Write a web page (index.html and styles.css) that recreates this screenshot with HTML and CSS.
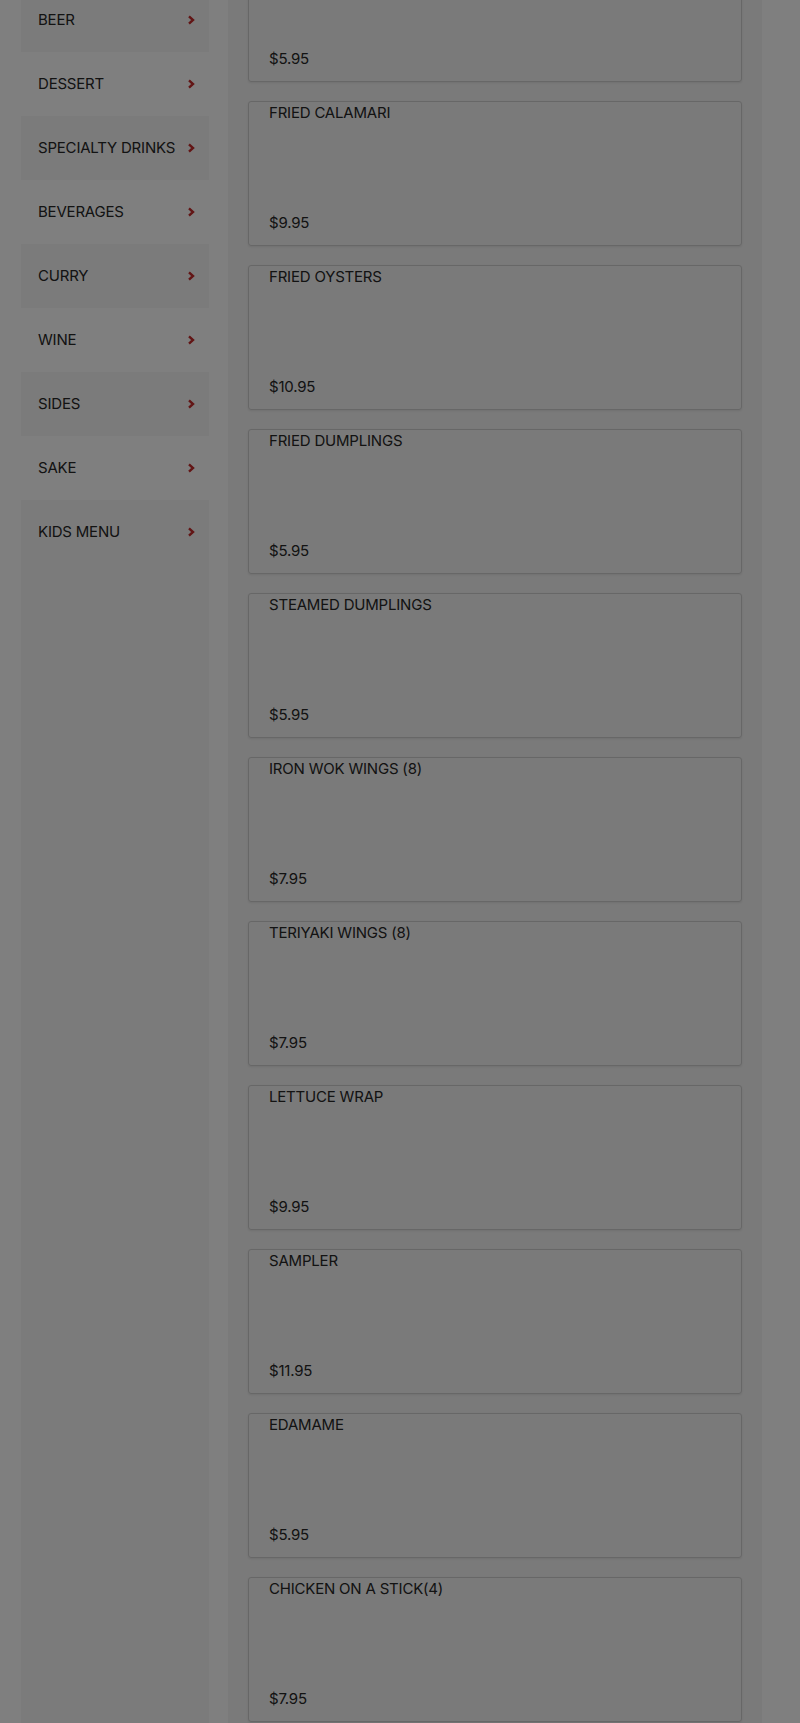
FILE: index.html
```html
<!DOCTYPE html>
<html lang="en">
<head>
    <meta charset="UTF-8">
    <meta name="viewport" content="width=device-width, initial-scale=1.0">
    <title>Menu</title>
    <link rel="stylesheet" href="styles.css">
</head>
<body class="modal-open">

    <div class="menu-page">
        <aside class="menu-nav">
            <a class="menu-nav__item" href="#">BEER <svg class="chev" viewBox="0 0 8 10"><polyline points="2,1.4 6,5 2,8.6"/></svg></a>
            <a class="menu-nav__item" href="#">DESSERT <svg class="chev" viewBox="0 0 8 10"><polyline points="2,1.4 6,5 2,8.6"/></svg></a>
            <a class="menu-nav__item" href="#">SPECIALTY DRINKS <svg class="chev" viewBox="0 0 8 10"><polyline points="2,1.4 6,5 2,8.6"/></svg></a>
            <a class="menu-nav__item" href="#">BEVERAGES <svg class="chev" viewBox="0 0 8 10"><polyline points="2,1.4 6,5 2,8.6"/></svg></a>
            <a class="menu-nav__item" href="#">CURRY <svg class="chev" viewBox="0 0 8 10"><polyline points="2,1.4 6,5 2,8.6"/></svg></a>
            <a class="menu-nav__item" href="#">WINE <svg class="chev" viewBox="0 0 8 10"><polyline points="2,1.4 6,5 2,8.6"/></svg></a>
            <a class="menu-nav__item" href="#">SIDES <svg class="chev" viewBox="0 0 8 10"><polyline points="2,1.4 6,5 2,8.6"/></svg></a>
            <a class="menu-nav__item" href="#">SAKE <svg class="chev" viewBox="0 0 8 10"><polyline points="2,1.4 6,5 2,8.6"/></svg></a>
            <a class="menu-nav__item" href="#">KIDS MENU <svg class="chev" viewBox="0 0 8 10"><polyline points="2,1.4 6,5 2,8.6"/></svg></a>
        </aside>

        <main class="menu-list">
            <div class="menu-card">
                <div class="menu-card__name"></div>
                <div class="menu-card__price">$5.95</div>
            </div>
            <div class="menu-card">
                <div class="menu-card__name">FRIED CALAMARI</div>
                <div class="menu-card__price">$9.95</div>
            </div>
            <div class="menu-card">
                <div class="menu-card__name">FRIED OYSTERS</div>
                <div class="menu-card__price">$10.95</div>
            </div>
            <div class="menu-card">
                <div class="menu-card__name">FRIED DUMPLINGS</div>
                <div class="menu-card__price">$5.95</div>
            </div>
            <div class="menu-card">
                <div class="menu-card__name">STEAMED DUMPLINGS</div>
                <div class="menu-card__price">$5.95</div>
            </div>
            <div class="menu-card">
                <div class="menu-card__name">IRON WOK WINGS (8)</div>
                <div class="menu-card__price">$7.95</div>
            </div>
            <div class="menu-card">
                <div class="menu-card__name">TERIYAKI WINGS (8)</div>
                <div class="menu-card__price">$7.95</div>
            </div>
            <div class="menu-card">
                <div class="menu-card__name">LETTUCE WRAP</div>
                <div class="menu-card__price">$9.95</div>
            </div>
            <div class="menu-card">
                <div class="menu-card__name">SAMPLER</div>
                <div class="menu-card__price">$11.95</div>
            </div>
            <div class="menu-card">
                <div class="menu-card__name">EDAMAME</div>
                <div class="menu-card__price">$5.95</div>
            </div>
            <div class="menu-card">
                <div class="menu-card__name">CHICKEN ON A STICK(4)</div>
                <div class="menu-card__price">$7.95</div>
            </div>
        </main>
    </div>

    <!-- dimmed backdrop of the open modal -->
    <div class="modal-backdrop"></div>

</body>
</html>
```

FILE: styles.css
```css
* {
    box-sizing: border-box;
    margin: 0;
    padding: 0;
}

body {
    background: #fff;
    color: #262626;
    font-family: Inter, "Liberation Sans", sans-serif;
    font-size: 15px;
    letter-spacing: -0.2px;
    line-height: 20px;
}

body.modal-open {
    height: 100vh;
    overflow: hidden;
}

.menu-page {
    display: flex;
    align-items: stretch;
    gap: 19px;
    margin-top: -76px;
    padding-left: 21px;
}

/* Category sidebar */
.menu-nav {
    width: 188px;
    flex-shrink: 0;
    padding-top: 64px;
    background: linear-gradient(#fff 64px, #f6f6f6 64px);
}

.menu-nav__item {
    display: flex;
    align-items: center;
    justify-content: space-between;
    height: 64px;
    padding: 0 14px 0 17px;
    color: inherit;
    text-decoration: none;
}

.menu-nav__item:nth-child(even) {
    background: #fff;
}

.chev {
    width: 8px;
    height: 10px;
    fill: none;
    stroke: #c42a2a;
    stroke-width: 2.4;
}

/* Item list */
.menu-list {
    width: 534px;
    flex-shrink: 0;
    background: #f4f4f4;
    padding: 13px 20px 0;
}

.menu-card {
    display: flex;
    flex-direction: column;
    justify-content: space-between;
    height: 145px;
    margin-bottom: 19px;
    padding: 1px 20px 12px;
    border: 1px solid #cecece;
    border-radius: 3px;
    box-shadow: 0 1px 2px rgba(0, 0, 0, 0.08);
}

.modal-backdrop {
    position: fixed;
    top: 0;
    left: 0;
    right: 0;
    bottom: 0;
    background: rgba(0, 0, 0, 0.5);
}
```
